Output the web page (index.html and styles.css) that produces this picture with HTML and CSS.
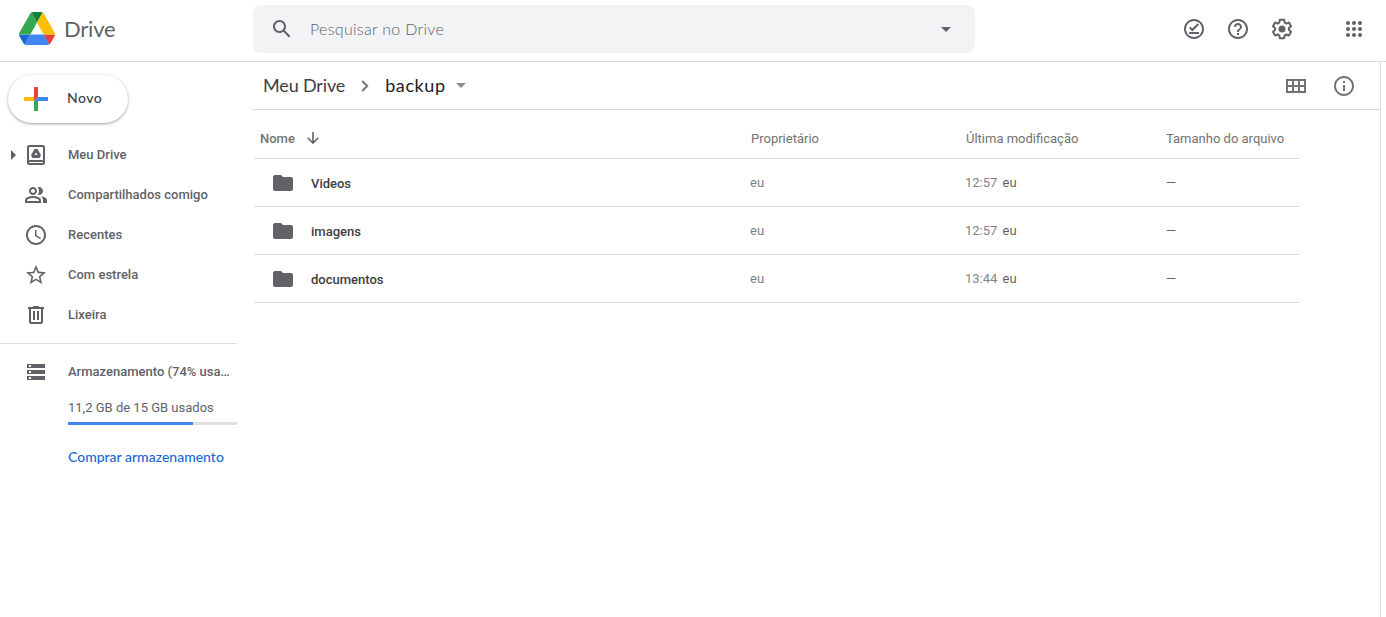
FILE: index.html
```html
<!DOCTYPE html>
<html lang="pt-BR">
<head>
<meta charset="utf-8">
<title>backup - Google Drive</title>
<link rel="stylesheet" href="styles.css">
</head>
<body>
<header class="topbar">
  <div class="brand">
    <svg class="logo" viewBox="0 0 87.3 78" preserveAspectRatio="none">
      <path fill="#1967d2" d="m6.6 66.85 3.85 6.65c.8 1.4 1.95 2.5 3.3 3.3l13.75-23.8h-27.5c0 1.55.4 3.1 1.2 4.5z"/>
      <path fill="#34a853" d="m43.65 25-13.75-23.8c-1.35.8-2.5 1.9-3.3 3.3l-25.4 44a9.06 9.06 0 0 0 -1.2 4.5h27.5z"/>
      <path fill="#ea4335" d="m73.55 76.8c1.35-.8 2.5-1.9 3.3-3.3l1.6-2.75 7.65-13.25c.8-1.4 1.2-2.95 1.2-4.5h-27.5l5.85 11.5z"/>
      <path fill="#188038" d="m43.65 25 13.75-23.8c-1.35-.8-2.9-1.2-4.5-1.2h-18.5c-1.6 0-3.15.45-4.5 1.2z"/>
      <path fill="#4285f4" d="m59.8 53h-32.3l-13.75 23.8c1.35.8 2.9 1.2 4.5 1.2h50.8c1.6 0 3.15-.45 4.5-1.2z"/>
      <path fill="#fbbc04" d="m73.4 26.5-12.7-22c-.8-1.4-1.95-2.5-3.3-3.3l-13.75 23.8 16.15 28h27.45c0-1.55-.4-3.1-1.2-4.5z"/>
    </svg>
    <span class="brand-name">Drive</span>
  </div>
  <div class="search">
    <svg class="icon" viewBox="0 0 24 24"><path d="M20.49 19l-5.73-5.73C15.53 12.2 16 10.91 16 9.5 16 5.91 13.09 3 9.5 3S3 5.91 3 9.5 5.91 16 9.5 16c1.41 0 2.7-.47 3.77-1.24L19 20.49 20.49 19zM5 9.5C5 7.01 7.01 5 9.5 5S14 7.01 14 9.5 11.99 14 9.5 14 5 11.99 5 9.5z"/></svg>
    <span class="placeholder">Pesquisar no Drive</span>
    <svg class="icon" viewBox="0 0 24 24"><path d="M7 10l5 5 5-5z"/></svg>
  </div>
  <div class="tools">
    <svg class="icon" viewBox="0 0 24 24"><path d="M12 2C6.5 2 2 6.5 2 12s4.5 10 10 10 10-4.500 10-10S17.500 2 12 2zm0 18c-4.420 0-8-3.580-8-8s3.580-8 8-8 8 3.580 8 8-3.580 8-8 8zM7 15h10v2H7zM15.600 6.300L10.300 11.600 8.400 9.700 7 11.100l3.300 3.300L17 7.700z"/></svg>
    <svg class="icon" viewBox="0 0 24 24"><path d="M11 18h2v-2h-2v2zm1-16C6.480 2 2 6.480 2 12s4.480 10 10 10 10-4.480 10-10S17.520 2 12 2zm0 18c-4.410 0-8-3.590-8-8s3.590-8 8-8 8 3.590 8 8-3.590 8-8 8zm0-14c-2.210 0-4 1.790-4 4h2c0-1.100.9-2 2-2s2 .9 2 2c0 2-3 1.750-3 5h2c0-2.250 3-2.500 3-5 0-2.210-1.790-4-4-4z"/></svg>
    <svg class="icon" viewBox="0 0 24 24"><path d="M13.850 22.250h-3.700c-.74 0-1.360-.54-1.450-1.270l-.27-1.890c-.27-.14-.53-.29-.79-.46l-1.800.72c-.7.26-1.470-.03-1.810-.65L2.200 15.530c-.35-.66-.2-1.440.36-1.880l1.530-1.190c-.01-.15-.02-.3-.02-.46 0-.15.010-.31.020-.46l-1.520-1.190c-.59-.45-.74-1.260-.37-1.880l1.850-3.190c.34-.62 1.110-.9 1.790-.63l1.810.73c.26-.17.52-.32.780-.46l.27-1.910c.09-.7.71-1.250 1.440-1.250h3.700c.74 0 1.360.54 1.450 1.270l.27 1.890c.27.14.53.29.79.46l1.800-.72c.71-.26 1.480.03 1.820.65l1.840 3.180c.36.66.2 1.440-.36 1.880l-1.520 1.190c.01.15.02.3.02.46s-.01.31-.02.46l1.520 1.190c.56.45.72 1.230.37 1.860l-1.860 3.220c-.34.62-1.110.9-1.800.63l-1.800-.72c-.26.17-.52.32-.78.46l-.27 1.910c-.1.680-.72 1.220-1.460 1.220zm-3.230-2h2.760l.37-2.550.53-.22c.44-.18.88-.44 1.340-.78l.45-.34 2.380.96 1.380-2.400-2.030-1.580.07-.56c.03-.26.06-.51.06-.78s-.03-.53-.06-.78l-.07-.56 2.030-1.580-1.390-2.400-2.390.96-.45-.35c-.42-.32-.87-.58-1.330-.77l-.52-.22-.37-2.550h-2.760l-.37 2.550-.53.21c-.44.19-.88.44-1.340.79l-.45.33-2.380-.95-1.390 2.390 2.030 1.580-.07.56a7 7 0 0 0-.06.79c0 .26.02.53.06.78l.07.56-2.030 1.580 1.380 2.400 2.390-.96.45.35c.43.33.86.58 1.330.77l.53.22.38 2.550z"/><circle cx="12" cy="12" r="3.500"/></svg>
    <svg class="icon apps" viewBox="0 0 24 24"><circle cx="6" cy="6" r="2"/><circle cx="12" cy="6" r="2"/><circle cx="18" cy="6" r="2"/><circle cx="6" cy="12" r="2"/><circle cx="12" cy="12" r="2"/><circle cx="18" cy="12" r="2"/><circle cx="6" cy="18" r="2"/><circle cx="12" cy="18" r="2"/><circle cx="18" cy="18" r="2"/></svg>
  </div>
</header>
<div class="layout">
  <aside class="sidebar">
    <button class="new-button">
      <svg class="plus" viewBox="0 0 24 24"><path fill="#ea4335" d="M10 0h4v10l-4 4z"/><path fill="#fbbc04" d="M0 10h10v4H0z"/><path fill="#34a853" d="M10 14h4v10h-4z"/><path fill="#4285f4" d="M14 10h10v4H10z"/></svg>
      <span class="new-label">Novo</span>
    </button>
    <nav class="nav">
      <a class="nav-item">
        <svg class="caret" viewBox="0 0 5 10"><path d="M0 0l5 5-5 5z"/></svg>
        <svg class="icon" viewBox="0 0 24 24"><path fill-rule="evenodd" d="M19 2H5C3.900 2 3 2.900 3 4v16c0 1.100.9 2 2 2h14c1.100 0 2-.9 2-2V4c0-1.100-.9-2-2-2zm0 18H5v-1h14v1zm0-3H5V4h14v13z"/><path fill-rule="evenodd" d="M10.500 6h3L17 12.200 15.500 15h-7L7 12.200zM12 9.400L10.500 12h3z"/></svg>
        <span class="nav-label">Meu Drive</span>
      </a>
      <a class="nav-item">
        <span class="caret"></span>
        <svg class="icon" viewBox="0 0 24 24"><path d="M9 12c2.210 0 4-1.790 4-4s-1.790-4-4-4-4 1.790-4 4 1.790 4 4 4zm0-6c1.100 0 2 .9 2 2s-.9 2-2 2-2-.9-2-2 .9-2 2-2zm0 7c-2.670 0-8 1.340-8 4v3h16v-3c0-2.660-5.330-4-8-4zm6 5H3v-.990C3.200 16.290 6.300 15 9 15s5.800 1.290 6 2v1zM15 12c2.210 0 4-1.790 4-4s-1.790-4-4-4c-.47 0-.91.100-1.330.24C14.500 5.270 15 6.580 15 8s-.5 2.730-1.330 3.760c.42.14.86.24 1.330.24zm1.660 1.130C18.030 14.060 19 15.320 19 17v3h4v-3c0-2.180-3.580-3.470-6.340-3.870z"/></svg>
        <span class="nav-label">Compartilhados comigo</span>
      </a>
      <a class="nav-item">
        <span class="caret"></span>
        <svg class="icon" viewBox="0 0 24 24"><path d="M11.990 2C6.470 2 2 6.480 2 12s4.470 10 9.990 10C17.520 22 22 17.520 22 12S17.520 2 11.990 2zM12 20c-4.420 0-8-3.580-8-8s3.580-8 8-8 8 3.580 8 8-3.580 8-8 8zm.5-13H11v6l5.250 3.150.75-1.230-4.500-2.670z"/></svg>
        <span class="nav-label">Recentes</span>
      </a>
      <a class="nav-item">
        <span class="caret"></span>
        <svg class="icon" viewBox="0 0 24 24"><path d="M22 9.240l-7.190-.62L12 2 9.190 8.630 2 9.240l5.460 4.730L5.820 21 12 17.270 18.180 21l-1.630-7.030L22 9.240zM12 15.400l-3.760 2.270 1-4.280-3.320-2.880 4.380-.38L12 6.100l1.710 4.040 4.380.38-3.320 2.880 1 4.280L12 15.400z"/></svg>
        <span class="nav-label">Com estrela</span>
      </a>
      <a class="nav-item">
        <span class="caret"></span>
        <svg class="icon" viewBox="0 0 24 24"><path d="M15 4V3H9v1H4v2h1v13c0 1.100.9 2 2 2h10c1.100 0 2-.9 2-2V6h1V4h-5zm2 15H7V6h10v13zM9 8h2v9H9zm4 0h2v9h-2z"/></svg>
        <span class="nav-label">Lixeira</span>
      </a>
    </nav>
    <section class="storage">
      <div class="nav-item storage-title">
        <span class="caret"></span>
        <svg class="icon" viewBox="0 0 24 24"><path fill-rule="evenodd" d="M3 20h18v-4H3v4zm2-3h2v2H5v-2zM3 4v4h18V4H3zm4 3H5V5h2v2zm-4 7h18v-4H3v4zm2-3h2v2H5v-2z"/></svg>
        <span class="nav-label">Armazenamento (74% usa…</span>
      </div>
      <div class="quota">
        <div class="quota-text">11,2 GB de 15 GB usados</div>
        <div class="meter"><div class="meter-fill" style="width:74%"></div></div>
        <a class="buy">Comprar armazenamento</a>
      </div>
    </section>
  </aside>
  <main class="content">
    <div class="pathbar">
      <span class="crumb">Meu Drive</span>
      <svg class="chevron" viewBox="0 0 8 12"><path d="M1.200 1l5 5-5 5"/></svg>
      <span class="crumb current">backup</span>
      <svg class="drop" viewBox="0 0 10 5"><path d="M0 0h10L5 5z"/></svg>
      <div class="actions">
        <svg class="icon" viewBox="0 0 24 24"><path fill-rule="evenodd" d="M2 5h20v14H2zM4 7v4h4V7zm6 0v4h4V7zm6 0v4h4V7zM4 13v4h4v-4zm6 0v4h4v-4zm6 0v4h4v-4z"/></svg>
        <svg class="icon" viewBox="0 0 24 24"><path d="M11 17h2v-6h-2v6zm1-15C6.480 2 2 6.480 2 12s4.480 10 10 10 10-4.480 10-10S17.520 2 12 2zm0 18c-4.410 0-8-3.590-8-8s3.590-8 8-8 8 3.590 8 8-3.590 8-8 8zM11 9h2V7h-2v2z"/></svg>
      </div>
    </div>
    <div class="files">
      <div class="row head">
        <div class="sort"><span class="sort-label">Nome</span><svg class="arrow" viewBox="0 0 12 12"><path d="M6 0v10.800M.7 5.700L6 11l5.300-5.300"/></svg></div>
        <span class="col">Proprietário</span><span class="col">Última modificação</span><span>Tamanho do arquivo</span>
      </div>
      <div class="row">
        <div class="name"><svg class="icon" viewBox="0 0 24 24"><path d="M10 4H4c-1.100 0-2 .9-2 2v12c0 1.100.9 2 2 2h16c1.100 0 2-.9 2-2V8c0-1.100-.9-2-2-2h-8l-2-2z"/></svg><span class="file-name">Videos</span></div>
        <span>eu</span><span>12:57 <span class="who">eu</span></span><span class="size">—</span>
      </div>
      <div class="row">
        <div class="name"><svg class="icon" viewBox="0 0 24 24"><path d="M10 4H4c-1.100 0-2 .9-2 2v12c0 1.100.9 2 2 2h16c1.100 0 2-.9 2-2V8c0-1.100-.9-2-2-2h-8l-2-2z"/></svg><span class="file-name">imagens</span></div>
        <span>eu</span><span>12:57 <span class="who">eu</span></span><span class="size">—</span>
      </div>
      <div class="row">
        <div class="name"><svg class="icon" viewBox="0 0 24 24"><path d="M10 4H4c-1.100 0-2 .9-2 2v12c0 1.100.9 2 2 2h16c1.100 0 2-.9 2-2V8c0-1.100-.9-2-2-2h-8l-2-2z"/></svg><span class="file-name">documentos</span></div>
        <span>eu</span><span>13:44 <span class="who">eu</span></span><span class="size">—</span>
      </div>
    </div>
  </main>
</div>
</body>
</html>
```
FILE: styles.css
```css
* { box-sizing: border-box; }
body {
  margin: 0;
  height: 617px;
  display: flex;
  flex-direction: column;
  overflow: hidden;
  background: #fff;
  color: #5f6368;
  font-family: Roboto, sans-serif;
  font-size: 13px;
}
svg { display: block; flex: none; }
.icon { width: 24px; height: 24px; fill: #5f6368; }

.topbar {
  height: 62px;
  flex: none;
  display: flex;
  align-items: flex-start;
  border-bottom: 1px solid #dadce0;
}
.brand { width: 253px; padding: 12px 0 0 19px; display: flex; }
.logo { width: 36px; height: 33px; }
.brand-name {
  margin-left: 9px;
  font: 22px/34px Lato, sans-serif;
  letter-spacing: -0.2px;
}
.search {
  width: 722px;
  height: 48px;
  margin-top: 5px;
  padding: 0 17px;
  display: flex;
  align-items: center;
  background: #f1f3f4;
  border-radius: 8px;
}
.placeholder {
  flex: 1;
  margin-left: 16px;
  font: 300 16px/24px Lato, sans-serif;
  letter-spacing: .3px;
  color: #5f6368;
}
.tools { margin-left: auto; padding: 17px 20px 0 0; display: flex; gap: 20px; }
.apps { margin-left: 28px; }

.layout { flex: 1; display: flex; }
.sidebar { width: 237px; flex: none; padding-top: 13px; }
.new-button {
  width: 120px;
  height: 48px;
  margin: 0 0 12px 8px;
  padding: 0 0 0 16px;
  display: flex;
  align-items: center;
  border: 0;
  border-radius: 24px;
  background: #fff;
  box-shadow: 0 1px 2px rgba(60, 64, 67, .3), 0 1px 3px 1px rgba(60, 64, 67, .15);
}
.plus { width: 24px; height: 24px; }
.new-label {
  margin-left: 19px;
  padding-bottom: 2px;
  font: 500 14px/20px Lato, sans-serif;
  color: #3c4043;
  letter-spacing: .5px;
}
.nav { padding-bottom: 8px; }
.nav-item {
  height: 40px;
  padding-left: 11px;
  display: flex;
  align-items: center;
  font-weight: 500;
}
.caret { width: 5px; height: 10px; margin-right: 8px; flex: none; fill: #5f6368; }
.nav-label {
  margin-left: 20px;
  padding-bottom: 2px;
  white-space: nowrap;
}
.storage { border-top: 1px solid #dadce0; padding-top: 8px; }
.quota { padding-left: 68px; }
.quota-text { margin-top: 8px; line-height: 16px; white-space: nowrap; }
.meter { margin-top: 6px; height: 3px; background: #e0e0e0; }
.meter-fill { height: 3px; background: #4285f4; }
.buy {
  display: block;
  margin-top: 22px;
  font: 500 14px/20px Lato, sans-serif;
  color: #1967d2;
  white-space: nowrap;
}

.content { width: 1128px; margin-left: 16px; border-right: 1px solid #dadce0; }
.pathbar {
  height: 48px;
  padding: 0 24px 0 10px;
  display: flex;
  align-items: center;
  border-bottom: 1px solid #dadce0;
}
.crumb { padding-bottom: 2px; font: 18px/24px Lato, sans-serif; letter-spacing: -.15px; color: #3c4043; }
.current { letter-spacing: .6px; color: #202124; }
.chevron { width: 8px; height: 12px; margin: 0 16px; fill: none; stroke: #757575; stroke-width: 2; }
.drop { width: 10px; height: 5px; margin-left: 10px; fill: #8b8f93; }
.actions { margin-left: auto; display: flex; gap: 24px; }
.actions .icon { fill: #737373; }
.files { width: 1046px; margin-left: 1px; }
.row {
  height: 48px;
  display: grid;
  grid-template-columns: 496px 215px 201px 134px;
  align-items: center;
  border-bottom: 1px solid #dadce0;
  color: #80868b;
  white-space: nowrap;
}
.head { height: 49px; padding-top: 9px; color: #737373; }
.col { padding-left: 1px; }
.sort { display: flex; align-items: center; padding-left: 6px; font-weight: 500; }
.arrow { width: 12px; height: 12px; margin: -2px 0 0 12px; fill: none; stroke: #5f6368; stroke-width: 1.6; }
.name { display: flex; align-items: center; padding-left: 17px; gap: 16px; font-weight: 500; color: #3c4043; }
.file-name { padding-top: 1px; }
.who { margin-left: 2px; color: #5f6368; }
.size { color: #5f6368; }
```
